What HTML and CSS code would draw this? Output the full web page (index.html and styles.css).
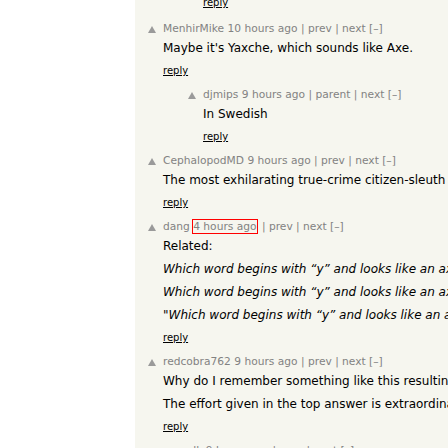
FILE: index.html
```html
<!DOCTYPE html>
<html lang="en">
<head>
<meta charset="utf-8">
<title>Comments</title>
<link rel="stylesheet" href="styles.css">
</head>
<body>
<div class="page">
  <div class="thread">
    <div class="comtr">
      <div class="ind d1"></div>
      <div class="votelinks"></div>
      <div class="comment">
        <div class="reply first"><a href="#">reply</a></div>
      </div>
    </div>

    <div class="comtr">
      <div class="votelinks"><svg class="arrow" viewBox="0 0 8 7"><polygon points="4,0 8,7 0,7"/></svg></div>
      <div class="comment">
        <div class="comhead"><span class="user">MenhirMike</span> <span class="age">10 hours ago</span> | prev | next [–]</div>
        <div class="commtext"><p>Maybe it's Yaxche, which sounds like Axe.</p></div>
        <div class="reply"><a href="#">reply</a></div>
      </div>
    </div>

    <div class="comtr">
      <div class="ind d1"></div>
      <div class="votelinks"><svg class="arrow" viewBox="0 0 8 7"><polygon points="4,0 8,7 0,7"/></svg></div>
      <div class="comment">
        <div class="comhead"><span class="user">djmips</span> <span class="age">9 hours ago</span> | parent | next [–]</div>
        <div class="commtext"><p>In Swedish</p></div>
        <div class="reply"><a href="#">reply</a></div>
      </div>
    </div>

    <div class="comtr">
      <div class="votelinks"><svg class="arrow" viewBox="0 0 8 7"><polygon points="4,0 8,7 0,7"/></svg></div>
      <div class="comment">
        <div class="comhead"><span class="user">CephalopodMD</span> <span class="age">9 hours ago</span> | prev | next [–]</div>
        <div class="commtext"><p>The most exhilarating true-crime citizen-sleuth story I've read in a while.</p></div>
        <div class="reply"><a href="#">reply</a></div>
      </div>
    </div>

    <div class="comtr">
      <div class="votelinks"><svg class="arrow" viewBox="0 0 8 7"><polygon points="4,0 8,7 0,7"/></svg></div>
      <div class="comment">
        <div class="comhead"><span class="user">dang</span> <span class="age hl">4 hours ago</span> | prev | next [–]</div>
        <div class="commtext">
          <p>Related:</p>
          <p><i>Which word begins with “y” and looks like an axe in this picture?</i></p>
          <p><i>Which word begins with “y” and looks like an axe in this picture? (2020)</i></p>
          <p><i>"Which word begins with “y” and looks like an axe in this picture?"</i></p>
        </div>
        <div class="reply"><a href="#">reply</a></div>
      </div>
    </div>

    <div class="comtr">
      <div class="votelinks"><svg class="arrow" viewBox="0 0 8 7"><polygon points="4,0 8,7 0,7"/></svg></div>
      <div class="comment">
        <div class="comhead"><span class="user">redcobra762</span> <span class="age">9 hours ago</span> | prev | next [–]</div>
        <div class="commtext">
          <p>Why do I remember something like this resulting in an answer years ago?</p>
          <p>The effort given in the top answer is extraordinary.</p>
        </div>
        <div class="reply"><a href="#">reply</a></div>
      </div>
    </div>

    <div class="comtr">
      <div class="votelinks"><svg class="arrow" viewBox="0 0 8 7"><polygon points="4,0 8,7 0,7"/></svg></div>
      <div class="comment">
        <div class="comhead"><span class="user">pomelk</span> <span class="age">9 hours ago</span> | prev | next [–]</div>
      </div>
    </div>
  </div>
</div>
</body>
</html>
```

FILE: styles.css
```css
html, body {
  margin: 0;
  padding: 0;
  height: 100%;
  background: #ffffff;
  overflow: hidden;
}

.page {
  margin-left: 135px;
  height: 100%;
  background: #f6f6ef;
  overflow: hidden;
  font-family: "DejaVu Sans", Verdana, sans-serif;
}

.thread {
  margin-top: -4px;
}

.comtr {
  display: flex;
  white-space: nowrap;
  margin-bottom: 9px;
}

.ind.d1 {
  flex: none;
  width: 40px;
}

.votelinks {
  flex: none;
  width: 28px;
  height: 16px;
  box-sizing: border-box;
  padding-left: 13px;
  display: flex;
  align-items: center;
}

.arrow {
  display: block;
  width: 8px;
  height: 7px;
  fill: #9a9a9a;
}

.comhead {
  font-size: 10.67px;
  line-height: 16px;
  color: #828282;
}

.hl {
  outline: 1px solid #ff0000;
  outline-offset: 0;
  margin-right: 2px;
}

.commtext {
  font-size: 12px;
  color: #000000;
}

.commtext p {
  margin: 0;
  line-height: 23px;
}

.reply {
  font-size: 10px;
  line-height: 14px;
  margin-top: 4px;
}

.reply.first {
  margin-top: 0;
}

.reply a {
  color: #000000;
  text-decoration: underline;
}
```
